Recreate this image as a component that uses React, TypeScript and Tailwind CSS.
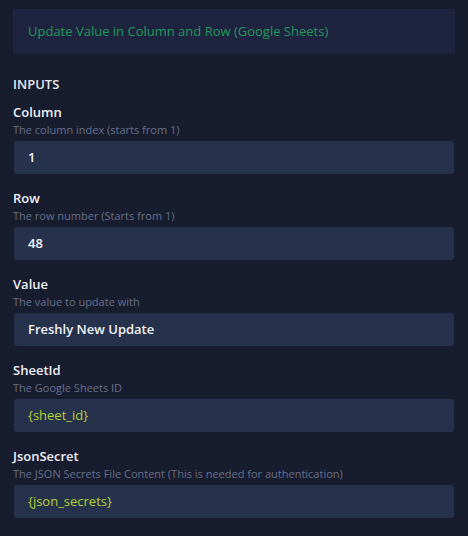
const fields = [
  { label: 'Column', desc: 'The column index (starts from 1)', value: '1', variable: false },
  { label: 'Row', desc: 'The row number (Starts from 1)', value: '48', variable: false },
  { label: 'Value', desc: 'The value to update with', value: 'Freshly New Update', variable: false },
  { label: 'SheetId', desc: 'The Google Sheets ID', value: '{sheet_id}', variable: true },
  {
    label: 'JsonSecret',
    desc: 'The JSON Secrets File Content (This is needed for authentication)',
    value: '{json_secrets}',
    variable: true,
  },
];

export default function App() {
  return (
    <div className="w-[468px] h-[536px] bg-[#181c2f] font-['Open_Sans',sans-serif] overflow-hidden">
      <div className="px-[13px] pt-[9px]">
        <div className="h-[45px] bg-[#1e2440] flex items-center pl-[15px]">
          <span className="text-[13px] text-[#22995a]">Update Value in Column and Row (Google Sheets)</span>
        </div>

        <div className="mt-[20px] text-[13px] leading-[20px] font-semibold text-[#e5e7eb]">INPUTS</div>

        <div className="mt-[8px] flex flex-col gap-[14px]">
          {fields.map((f) => (
            <div key={f.label}>
              <div className="text-[13px] leading-[20px] font-semibold text-[#eef0f4]">{f.label}</div>
              <div className="text-[11px] leading-[16px] text-[#67708a]">{f.desc}</div>
              <div className="mt-[3px] mx-px h-[33px] rounded-[3px] bg-[#26314b] flex items-center px-[14px]">
                <span
                  className={
                    f.variable
                      ? 'text-[13px] text-[#b3d134]'
                      : 'text-[13px] font-semibold text-[#f1f3f7]'
                  }
                >
                  {f.value}
                </span>
              </div>
            </div>
          ))}
        </div>
      </div>
    </div>
  );
}
